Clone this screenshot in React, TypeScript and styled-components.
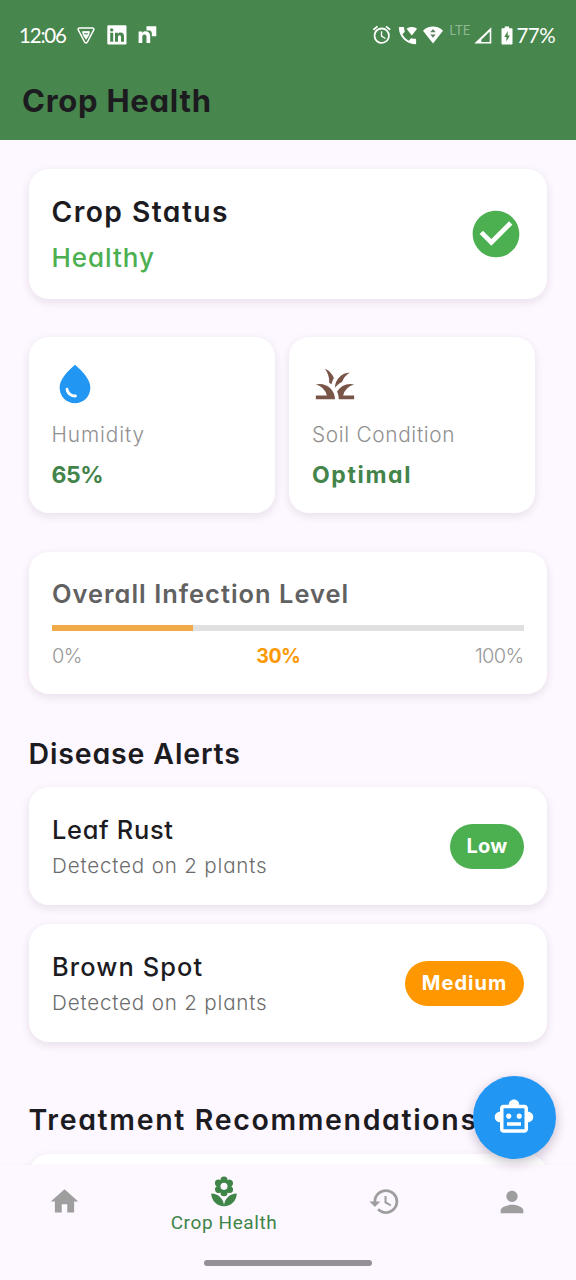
import React from 'react';
import styled, { createGlobalStyle } from 'styled-components';
import {
  MdAlarm,
  MdCheckCircle,
  MdGrass,
  MdHistory,
  MdHome,
  MdLocalFlorist,
  MdOutlineSmartToy,
  MdPerson,
  MdWaterDrop,
  MdWifiCalling,
} from 'react-icons/md';

const GlobalStyle = createGlobalStyle`
  * { box-sizing: border-box; }
  body { margin: 0; background: #fdf7ff; }
`;

const Screen = styled.div`
  position: relative;
  display: flex;
  flex-direction: column;
  width: 576px;
  height: 1280px;
  overflow: hidden;
  background: #fdf7ff;
  color: #1c1b1f;
  font-family: Inter, 'Liberation Sans', sans-serif;
  font-feature-settings: 'cv11';
  white-space: nowrap;

  svg { display: block; flex: none; }
`;

const Header = styled.header`
  flex: none;
  height: 140px;
  background: #47864c;
`;

const StatusBar = styled.div`
  display: flex;
  align-items: center;
  justify-content: space-between;
  height: 70px;
  padding: 0 21px 0 19px;
  color: #fff;
`;

const StatusGroup = styled.div`
  display: flex;
  align-items: center;
`;

const StatusText = styled.span<{ $spacing: number }>`
  display: block;
  margin-top: -1px;
  font: 400 20.5px/24px Lato, sans-serif;
  letter-spacing: ${(p) => p.$spacing}px;
`;

const Network = styled.span`
  margin: -10px 3px 0 6px;
  font: 400 13px/16px Lato, sans-serif;
  letter-spacing: 0.2px;
  color: #8fb893;
`;

const StatusIcon = styled.span<{ $gap: number }>`
  margin-left: ${(p) => p.$gap}px;
`;

const AppTitle = styled.h1`
  margin: 0;
  padding-left: 22px;
  font-size: 31px;
  font-weight: 700;
  line-height: 62px;
  letter-spacing: 0.75px;
`;

const Content = styled.main`
  flex: 1;
  min-height: 0;
  overflow: hidden;
  padding: 29px 29px 0 28.5px;
`;

const Card = styled.section`
  border-radius: 20px;
  background: #fff;
  box-shadow: 0 3px 10px rgba(40, 20, 50, 0.1);
`;

const StatusCard = styled(Card)`
  display: flex;
  align-items: center;
  justify-content: space-between;
  height: 129.5px;
  padding: 0 23.500px 0 23px;
`;

const StatusSummary = styled.div`
  padding-top: 3px;
`;

const CardTitle = styled.h2`
  margin: 0;
  font-size: 28.2px;
  font-weight: 600;
  line-height: 46px;
  letter-spacing: 1.45px;
`;

const Health = styled.p`
  margin: 0;
  font-size: 26px;
  font-weight: 500;
  line-height: 46px;
  letter-spacing: 0.97px;
  color: #4caf50;
`;

const Metrics = styled.div`
  display: flex;
  gap: 14.5px;
  margin: 38.3px 0;
`;

const MetricCard = styled(Card)`
  width: 246px;
  height: 176.5px;
  padding: 24px 23px 0;
`;

const MetricLabel = styled.div<{ $spacing: number }>`
  margin-top: 8.5px;
  font-size: 20.8px;
  font-weight: 300;
  line-height: 40px;
  letter-spacing: ${(p) => p.$spacing}px;
  color: #909090;
`;

const MetricValue = styled.div<{ $spacing: number }>`
  font-size: 23px;
  font-weight: 700;
  line-height: 40px;
  letter-spacing: ${(p) => p.$spacing}px;
  color: #43844a;
`;

const InfectionCard = styled(Card)`
  height: 142.7px;
  padding: 22px 23.5px 0;
`;

const InfectionTitle = styled.h2`
  margin: 0 0 11.3px;
  font-size: 25.4px;
  font-weight: 600;
  line-height: 40px;
  letter-spacing: 1.02px;
  color: #616161;
`;

const Track = styled.div`
  height: 6px;
  background: #e0e0e0;
`;

const Fill = styled.div`
  height: 100%;
  background: #f0ab48;
`;

const Scale = styled.div`
  display: flex;
  justify-content: space-between;
  margin-top: 7px;
  font-size: 20px;
  font-weight: 300;
  line-height: 36px;
  letter-spacing: -0.7px;
  color: #999;
`;

const Level = styled.strong`
  font-size: 19.5px;
  font-weight: 700;
  letter-spacing: -0.5px;
  color: #fb9804;
`;

const SectionTitle = styled.h2<{ $top: number; $spacing: number }>`
  margin: ${(p) => p.$top}px 0 11.4px;
  font-size: 28.5px;
  font-weight: 600;
  line-height: 44px;
  letter-spacing: ${(p) => p.$spacing}px;
`;

const AlertList = styled.div`
  display: flex;
  flex-direction: column;
  gap: 18.7px;
`;

const AlertCard = styled(Card)`
  display: flex;
  align-items: center;
  justify-content: space-between;
  height: 118.2px;
  padding: 2px 23px 0 23.5px;
`;

const AlertName = styled.h3<{ $spacing: number }>`
  margin: 0;
  font-size: 25.4px;
  font-weight: 500;
  line-height: 37px;
  letter-spacing: ${(p) => p.$spacing}px;
`;

const AlertDetail = styled.p`
  margin: 0;
  font-size: 20.6px;
  font-weight: 300;
  line-height: 36px;
  letter-spacing: 0.82px;
  color: #6c6c6c;
`;

const Badge = styled.span<{ $color: string; $spacing: number; $width: number }>`
  width: ${(p) => p.$width}px;
  margin-top: -2px;
  border-radius: 23px;
  background: ${(p) => p.$color};
  color: #fff;
  font-size: 20px;
  font-weight: 700;
  line-height: 45px;
  letter-spacing: ${(p) => p.$spacing}px;
  text-align: center;
`;

const Fab = styled.button`
  position: absolute;
  right: 20px;
  bottom: 121px;
  display: grid;
  place-items: center;
  width: 83.5px;
  height: 83.5px;
  padding: 0;
  border: 0;
  border-radius: 50%;
  background: #2196f3;
  color: #fff;
  box-shadow: 0 4px 12px rgba(40, 20, 50, 0.26);
`;

const BottomBar = styled.footer`
  flex: none;
  height: 115px;
  background: #fdf7ff;
  box-shadow: 0 -1px 2px rgba(40, 20, 50, 0.02);
`;

const Tabs = styled.nav`
  display: flex;
  height: 73px;
`;

const Tab = styled.a<{ $active?: boolean }>`
  flex: ${(p) => (p.$active ? 1.5 : 1)};
  display: flex;
  flex-direction: column;
  align-items: center;
  justify-content: center;
  padding-top: ${(p) => (p.$active ? 6 : 0)}px;
  color: ${(p) => (p.$active ? '#3f8548' : '#9e9e9e')};
`;

const TabLabel = styled.span`
  margin: -1px 0 -4px;
  font: 400 19px/30px Roboto, sans-serif;
  letter-spacing: 0.6px;
`;

const HomeIndicator = styled.div`
  width: 168px;
  height: 6px;
  margin: 22px auto 0;
  border-radius: 3px;
  background: #968f98;
`;

const ShieldIcon = () => (
  <svg width="18" height="17" viewBox="0 0 18 17" fill="none" stroke="#fff">
    <path d="M2.5 1h13c1 0 1.7 1 1.2 2l-6.3 12c-.6 1.2-2.2 1.2-2.8 0L1.3 3C.8 2 1.5 1 2.5 1z" strokeWidth="1.6" />
    <path d="M5.6 4.600h6.800L11.800 8 9 12.300 6.200 8z" fill="#fff" strokeWidth=".8" />
    <path d="M7 6.800h4" stroke="#47864c" strokeWidth="1" />
  </svg>
);

const LinkedInIcon = () => (
  <svg width="20" height="20" viewBox="0 0 20 20">
    <rect x=".3" y=".3" width="19.2" height="19.2" rx="1.2" fill="#fff" />
    <g fill="#47864c">
      <circle cx="4.7" cy="4.9" r="1.7" />
      <path d="M3.2 7.8h3v8.9h-3zM8 7.8h2.9V9c.6-.9 1.5-1.4 2.7-1.4 2.5 0 3.4 1.5 3.4 4.2v4.9h-3v-4.4c0-1.3-.3-2.1-1.4-2.1s-1.6.8-1.6 2.1v4.4H8z" />
    </g>
  </svg>
);

const ArrowNIcon = () => (
  <svg width="19" height="18" viewBox="0 0 19 18" fill="#fff">
    <path d="M.6 5.6h3.600v1.300C5 5.800 6 5.300 7.300 5.300c3 0 4.900 1.900 4.900 4.900v6.900H8.500v-6.200c0-1.500-.7-2.300-2-2.300s-2.200.8-2.200 2.300v6.200H.6z" />
    <path d="M8.500.200h9.800v10h-4.500V7.300c0-1.500-.8-2.600-2.300-2.800h-3z" />
  </svg>
);

const WifiDataIcon = () => (
  <svg width="20" height="18" viewBox="0 0 20 18">
    <path d="M0 4.8C2.8 2 6.2.6 10 .6s7.2 1.4 10 4.200L10 17.6z" fill="#fff" />
    <path d="M10 3l2.800 3.300H7.200zM10 11.800l2.800-3.300H7.200z" fill="#5f7f64" />
  </svg>
);

const SignalIcon = () => (
  <svg width="18" height="17" viewBox="0 0 18 17">
    <path d="M.3 16.5L17.3.2v16.3zM7.3 14.9h8.400V4.600l-8.400 8.200z" fill="#fff" fillRule="evenodd" />
  </svg>
);

const BatteryIcon = () => (
  <svg width="12" height="19" viewBox="0 0 12 19">
    <path d="M3.7.4h4.400v1.900h2.400c.6 0 1 .4 1 1v14.200c0 .6-.4 1-1 1h-9c-.6 0-1-.4-1-1V3.300c0-.6.4-1 1-1h2.200z" fill="#fff" />
    <path d="M6.700 5L3.300 11h2.100v4.600L8.900 9.500H6.700z" fill="#47864c" />
  </svg>
);

const alerts = [
  { name: 'Leaf Rust', detail: 'Detected on 2 plants', level: 'Low', color: '#4caf50', width: 74, nameSpacing: 0.7, levelSpacing: 0.2 },
  { name: 'Brown Spot', detail: 'Detected on 2 plants', level: 'Medium', color: '#ff9800', width: 119, nameSpacing: 1.12, levelSpacing: 1 },
];

const infection = 30;

export default function App() {
  return (
    <Screen>
      <GlobalStyle />
      <Header>
        <StatusBar>
          <StatusGroup>
            <StatusText $spacing={-1.2}>12:06</StatusText>
            <StatusIcon $gap={11}><ShieldIcon /></StatusIcon>
            <StatusIcon $gap={12}><LinkedInIcon /></StatusIcon>
            <StatusIcon $gap={11}><ArrowNIcon /></StatusIcon>
          </StatusGroup>
          <StatusGroup>
            <MdAlarm size={21.5} />
            <StatusIcon $gap={4}><MdWifiCalling size={23} /></StatusIcon>
            <StatusIcon $gap={4}><WifiDataIcon /></StatusIcon>
            <Network>LTE</Network>
            <SignalIcon />
            <StatusIcon $gap={9}><BatteryIcon /></StatusIcon>
            <StatusIcon $gap={4}><StatusText $spacing={-0.6}>77%</StatusText></StatusIcon>
          </StatusGroup>
        </StatusBar>
        <AppTitle>Crop Health</AppTitle>
      </Header>

      <Content>
        <StatusCard>
          <StatusSummary>
            <CardTitle>Crop Status</CardTitle>
            <Health>Healthy</Health>
          </StatusSummary>
          <MdCheckCircle size={56} color="#4caf50" />
        </StatusCard>

        <Metrics>
          <MetricCard>
            <MdWaterDrop size={46} color="#2196f3" />
            <MetricLabel $spacing={0.9}>Humidity</MetricLabel>
            <MetricValue $spacing={-0.4}>65%</MetricValue>
          </MetricCard>
          <MetricCard>
            <MdGrass size={46} color="#795548" />
            <MetricLabel $spacing={0.68}>Soil Condition</MetricLabel>
            <MetricValue $spacing={1.65}>Optimal</MetricValue>
          </MetricCard>
        </Metrics>

        <InfectionCard>
          <InfectionTitle>Overall Infection Level</InfectionTitle>
          <Track><Fill style={{ width: `${infection}%` }} /></Track>
          <Scale>
            <span>0%</span>
            <Level>{infection}%</Level>
            <span>100%</span>
          </Scale>
        </InfectionCard>

        <SectionTitle $top={37.600} $spacing={0.85}>Disease Alerts</SectionTitle>
        <AlertList>
          {alerts.map((a) => (
            <AlertCard key={a.name}>
              <div>
                <AlertName $spacing={a.nameSpacing}>{a.name}</AlertName>
                <AlertDetail>{a.detail}</AlertDetail>
              </div>
              <Badge $color={a.color} $width={a.width} $spacing={a.levelSpacing}>{a.level}</Badge>
            </AlertCard>
          ))}
        </AlertList>

        <SectionTitle $top={56} $spacing={1.65}>Treatment Recommendations</SectionTitle>
        <AlertCard />
      </Content>

      <BottomBar>
        <Tabs>
          <Tab><MdHome size={33} /></Tab>
          <Tab $active>
            <MdLocalFlorist size={34} />
            <TabLabel>Crop Health</TabLabel>
          </Tab>
          <Tab><MdHistory size={33} /></Tab>
          <Tab><MdPerson size={34} /></Tab>
        </Tabs>
        <HomeIndicator />
      </BottomBar>

      <Fab><MdOutlineSmartToy size={42} /></Fab>
    </Screen>
  );
}
